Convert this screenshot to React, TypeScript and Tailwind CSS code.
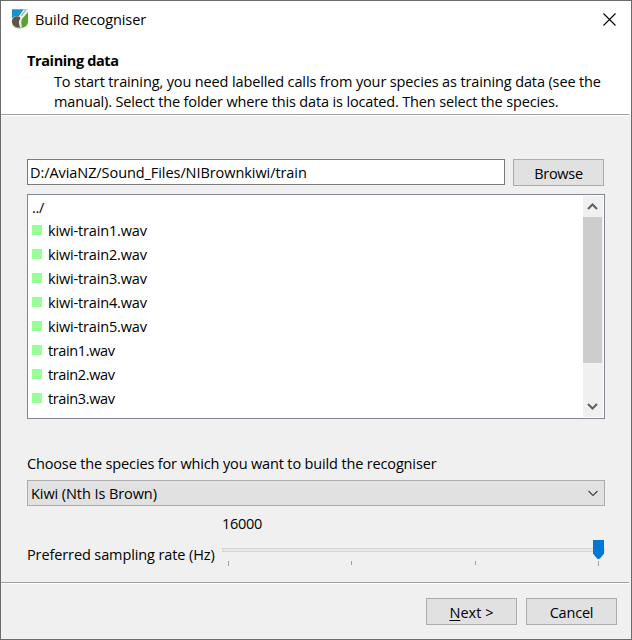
import React from "react";

const files = [
  { name: "kiwi-train1.wav", kiwi: true },
  { name: "kiwi-train2.wav", kiwi: true },
  { name: "kiwi-train3.wav", kiwi: true },
  { name: "kiwi-train4.wav", kiwi: true },
  { name: "kiwi-train5.wav", kiwi: true },
  { name: "train1.wav", kiwi: false },
  { name: "train2.wav", kiwi: false },
  { name: "train3.wav", kiwi: false },
];

function Logo() {
  return (
    <svg className="h-5 w-[18px]" viewBox="0 0 18 20">
      <path d="M1 .5H17V13Q17 18 9 19.5Q1 18 1 13Z" fill="#5da032" />
      <path d="M1 .5H15L9 7L1 10Z" fill="#1591d0" />
      <path d="M12.5 .5H17V3L11 10Q9.500 13 11 18L9 19.500Q4 19 1 13V9Q4 6.500 8 7Z" fill="#eef3e9" />
      <path d="M14.500 .5L9.500 6.500L11 7L15.500 1Z" fill="#8eb9c9" />
      <path d="M1 11Q2.500 7.300 6 7.300Q9.500 7.200 9.300 9.500Q7.500 12 8 14.500Q8.300 17 9.500 18.800Q2 18.800 1 13Z" fill="#5d554d" />
      <path d="M1 15Q3 18 6 18.500L9 19.500Q3 19.500 1 15Z" fill="#78a354" />
    </svg>
  );
}

function PushButton({ children }: { children: React.ReactNode }) {
  return (
    <button className="flex h-[27px] w-[91px] items-center justify-center border border-[#adadad] bg-[#e1e1e1] pt-[3px]">
      <span>{children}</span>
    </button>
  );
}

function Tick({ end = false }: { end?: boolean }) {
  return <i className={end ? "h-[5px] w-px bg-[#a5a394]" : "h-1 w-px bg-[#a0a0a0]"} />;
}

export default function App() {
  return (
    <main className="flex h-[640px] w-[632px] flex-col overflow-hidden border border-[#6b6b6b] bg-[#f0f0f0] font-['Open_Sans','Noto_Sans',sans-serif] text-[14.5px] leading-5 tracking-[-0.3px] whitespace-nowrap text-black">
      <header className="h-[113px] shrink-0 bg-white">
        <div className="flex h-[38px] items-start pl-[10px]">
          <div className="pt-2"><Logo /></div>
          <h1 className="ml-[6px] pt-[9px] tracking-[-0.08px]">Build Recogniser</h1>
          <svg className="mt-3 mr-[15px] ml-auto size-[13px]" viewBox="0 0 13 13" fill="none" stroke="#000" strokeWidth="1.1">
            <path d="M.5 .5L12.5 12.5M12.5 .5L.5 12.5" />
          </svg>
        </div>
        <h2 className="mt-3 ml-[26px] font-bold tracking-[-0.38px]">Training data</h2>
        <p className="mt-px ml-[53px] tracking-[-0.13px]">
          To start training, you need labelled calls from your species as training data (see the
          <br />
          <span className="tracking-[-0.15px]">manual). Select the folder where this data is located. Then select the species.</span>
        </p>
      </header>
      <div className="mr-[2px] h-[2px] shrink-0 border-t border-[#a0a0a0] bg-white" />
      <section className="h-[466px] shrink-0 pt-[43px] pr-[26px] pl-[26px]">
        <div className="flex gap-2">
          <div className="h-[26px] w-[478px] border border-[#7a7a7a] bg-white pt-[3px] pl-[2px] tracking-[-0.07px]">
            <span>D:/AviaNZ/Sound_Files/NIBrownkiwi/train</span>
          </div>
          <PushButton>Browse</PushButton>
        </div>
        <div className="mt-2 flex h-[225px] w-[578px] border border-[#828790] bg-white p-px">
          <ul className="flex-1 pt-px pl-[3px]">
            <li className="flex h-[22px] items-center">../</li>
            {files.map((file) => (
              <li key={file.name} className="flex h-6 items-center">
                <i className="mb-[2px] size-[10px] bg-[#99ff99]" />
                <span className={file.kiwi ? "ml-[6px] tracking-[-0.16px]" : "ml-[6px] tracking-[-0.38px]"}>{file.name}</span>
              </li>
            ))}
          </ul>
          <div className="flex w-5 flex-col bg-[#f0f0f0]">
            <svg className="h-[21px] w-[19px] shrink-0" viewBox="0 0 19 21" fill="none" stroke="#606060" strokeWidth="2">
              <path d="M5 13L9.5 8.5L14 13" />
            </svg>
            <div className="h-[146px] w-[19px] bg-[#cdcdcd]" />
            <svg className="mt-auto h-[21px] w-[19px]" viewBox="0 0 19 21" fill="none" stroke="#606060" strokeWidth="2">
              <path d="M5 8L9.5 12.5L14 8" />
            </svg>
          </div>
        </div>
        <p className="mt-[35px] tracking-[-0.15px]">Choose the species for which you want to build the recogniser</p>
        <div className="mt-[6px] flex h-[26px] w-[578px] items-start justify-between border border-[#adadad] bg-[#e1e1e1] pt-[3px] pr-[6px] pl-[3px] tracking-[-0.08px]">
          <span>Kiwi (Nth Is Brown)</span>
          <svg className="mt-[6px] h-[7px] w-[10px]" viewBox="0 0 10 7" fill="none" stroke="#404040" strokeWidth="1.1">
            <path d="M.5 1L5 5.5L9.5 1" />
          </svg>
        </div>
        <div className="mt-2 flex">
          <div className="w-[195px] pt-[31px] tracking-[-0.11px]">Preferred sampling rate (Hz)</div>
          <div className="w-[383px]">
            <div>16000</div>
            <div className="mt-[6px] grid h-[19px] items-center">
              <div className="col-start-1 row-start-1 h-1 border border-[#d6d6d6] bg-[#e7eaea]" />
              <svg className="col-start-1 row-start-1 mr-px h-[19px] w-[11px] justify-self-end" viewBox="0 0 11 19">
                <path d="M0 0H11V13.5L7.5 18Q5.5 20 3.5 18L0 13.5Z" fill="#0078d7" />
              </svg>
            </div>
            <div className="mt-[2px] flex justify-between pr-[6px] pl-[6px]">
              <Tick end />
              <Tick />
              <Tick />
              <Tick end />
            </div>
          </div>
        </div>
      </section>
      <div className="mr-[2px] h-[2px] shrink-0 border-t border-[#a0a0a0] bg-white" />
      <footer className="flex justify-end gap-[9px] pt-[14px] pr-[14px]">
        <PushButton>
          <span className="tracking-[0.05px]"><span className="underline underline-offset-2">N</span>ext &gt;</span>
        </PushButton>
        <PushButton><span className="tracking-[-0.2px]">Cancel</span></PushButton>
      </footer>
    </main>
  );
}
